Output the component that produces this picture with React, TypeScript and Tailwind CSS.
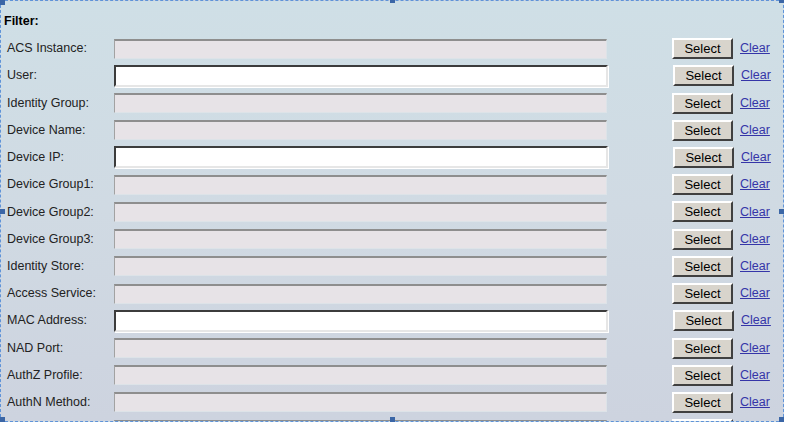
const rows: { label: string; enabled?: boolean }[] = [
  { label: "ACS Instance:" },
  { label: "User:", enabled: true },
  { label: "Identity Group:" },
  { label: "Device Name:" },
  { label: "Device IP:", enabled: true },
  { label: "Device Group1:" },
  { label: "Device Group2:" },
  { label: "Device Group3:" },
  { label: "Identity Store:" },
  { label: "Access Service:" },
  { label: "MAC Address:", enabled: true },
  { label: "NAD Port:" },
  { label: "AuthZ Profile:" },
  { label: "AuthN Method:" },
  { label: "" },
];

function Handle({ className }: { className: string }) {
  return <div className={`absolute w-[5px] h-[5px] bg-[#3b66a6] ${className}`} />;
}

export default function App() {
  return (
    <div className="w-[787px] h-[430px] bg-white font-['Liberation_Sans',Arial,sans-serif] text-[12.5px]">
      <div className="relative w-[784px] h-[422px]">
        {/* panel */}
        <div className="h-full w-full overflow-hidden border-[1.5px] border-dashed border-[#5f93d8] bg-gradient-to-b from-[#cfdfe6] via-[#d0dae3] to-[#cdd3df]">
          <div className="pl-[3px] pt-[14px] h-[34px] font-bold text-black leading-none">Filter:</div>
          <div className="flex flex-col">
            {rows.map((r, i) => (
              <div key={i} className="flex items-center h-[27.23px] shrink-0">
                <div className="w-[113px] pl-[6px] text-[#222]">{r.label}</div>
                {r.enabled ? (
                  <div className="w-[494px] h-[22px] bg-white border-2 border-t-[#3c3c3c] border-l-[#3c3c3c] border-r-[#e6e6e6] border-b-[#e6e6e6] shadow-[1px_1px_0_#ffffff]" />
                ) : (
                  <div className="w-[493px] h-[20px] bg-[#e7e3e7] border border-t-2 border-t-[#8e8e8e] border-l-[#a2a2a2] border-r-[#dde3e8] border-b-[#dde3e8]" />
                )}
                <div className="w-[65px]" />
                <button className="w-[61px] h-[21px] bg-[#d8d4cc] border-2 border-t-white border-l-white border-r-[#404040] border-b-[#404040] text-black text-[13px] leading-none">
                  {r.label ? "Select" : ""}
                </button>
                <a className="ml-[7px] text-[#3535a8] underline cursor-pointer">{r.label ? "Clear" : ""}</a>
              </div>
            ))}
          </div>
        </div>
        {/* selection handles */}
        <Handle className="left-0 top-0" />
        <Handle className="left-[390px] top-[-2px]" />
        <Handle className="left-[779px] top-[-2px]" />
        <Handle className="left-0 top-[209px]" />
        <Handle className="left-[779px] top-[209px]" />
        <Handle className="left-0 top-[417px]" />
        <Handle className="left-[390px] top-[417px]" />
        <Handle className="left-[779px] top-[417px]" />
      </div>
    </div>
  );
}
